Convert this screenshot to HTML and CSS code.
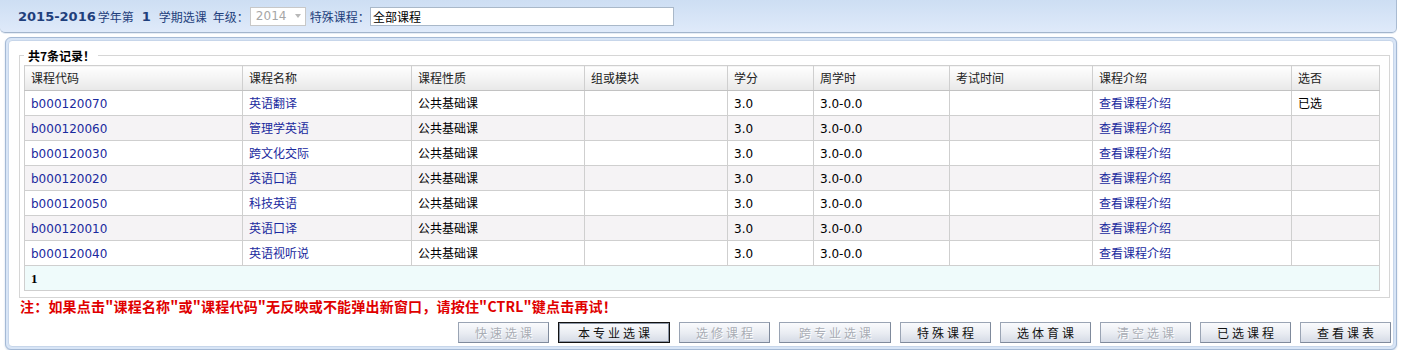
FILE: index.html
```html
<!DOCTYPE html>
<html lang="zh-CN">
<head>
<meta charset="utf-8">
<title>选课</title>
<link rel="stylesheet" href="styles.css">
</head>
<body>
<div class="topbar">
  <b class="yr">2015-2016</b><span class="lbl">学年第</span><b class="term">1</b><span class="lbl">学期选课</span><span class="lbl gap">年级：</span>
  <span class="sel"><span class="sel-val">2014</span><span class="sel-arrow"></span></span>
  <span class="lbl">特殊课程：</span>
  <span class="inp">全部课程</span>
</div>
<div class="panel">
  <div class="panel-inner">
    <fieldset class="box">
      <legend>共7条记录！</legend>
      <table class="grid">
        <colgroup>
          <col style="width:218px"><col style="width:169px"><col style="width:173px"><col style="width:143px"><col style="width:86px"><col style="width:136px"><col style="width:143px"><col style="width:199px"><col style="width:88px">
        </colgroup>
        <thead>
          <tr><th>课程代码</th><th>课程名称</th><th>课程性质</th><th>组或模块</th><th>学分</th><th>周学时</th><th>考试时间</th><th>课程介绍</th><th>选否</th></tr>
        </thead>
        <tbody>
          <tr><td><a>b000120070</a></td><td><a>英语翻译</a></td><td>公共基础课</td><td></td><td>3.0</td><td>3.0-0.0</td><td></td><td><a>查看课程介绍</a></td><td>已选</td></tr>
          <tr class="alt"><td><a>b000120060</a></td><td><a>管理学英语</a></td><td>公共基础课</td><td></td><td>3.0</td><td>3.0-0.0</td><td></td><td><a>查看课程介绍</a></td><td></td></tr>
          <tr><td><a>b000120030</a></td><td><a>跨文化交际</a></td><td>公共基础课</td><td></td><td>3.0</td><td>3.0-0.0</td><td></td><td><a>查看课程介绍</a></td><td></td></tr>
          <tr class="alt"><td><a>b000120020</a></td><td><a>英语口语</a></td><td>公共基础课</td><td></td><td>3.0</td><td>3.0-0.0</td><td></td><td><a>查看课程介绍</a></td><td></td></tr>
          <tr><td><a>b000120050</a></td><td><a>科技英语</a></td><td>公共基础课</td><td></td><td>3.0</td><td>3.0-0.0</td><td></td><td><a>查看课程介绍</a></td><td></td></tr>
          <tr class="alt"><td><a>b000120010</a></td><td><a>英语口译</a></td><td>公共基础课</td><td></td><td>3.0</td><td>3.0-0.0</td><td></td><td><a>查看课程介绍</a></td><td></td></tr>
          <tr><td><a>b000120040</a></td><td><a>英语视听说</a></td><td>公共基础课</td><td></td><td>3.0</td><td>3.0-0.0</td><td></td><td><a>查看课程介绍</a></td><td></td></tr>
          <tr class="pager"><td colspan="9">1</td></tr>
        </tbody>
      </table>
    </fieldset>
    <div class="note">注：如果点击"课程名称"或"课程代码"无反映或不能弹出新窗口，请按住"CTRL"键点击再试！</div>
    <div class="btns">
      <span class="btn w1 dis">快速选课</span>
      <span class="btn w2 act">本专业选课</span>
      <span class="btn w1 dis">选修课程</span>
      <span class="btn w2 dis">跨专业选课</span>
      <span class="btn w1">特殊课程</span>
      <span class="btn w1">选体育课</span>
      <span class="btn w1 dis">清空选课</span>
      <span class="btn w1">已选课程</span>
      <span class="btn w1">查看课表</span>
    </div>
  </div>
</div>
</body>
</html>
```

FILE: styles.css
```css
html, body {
  margin: 0;
  padding: 0;
  background: #ffffff;
}
body {
  font-family: "DejaVu Sans", "Noto Sans CJK SC", sans-serif;
  font-size: 12px;
  color: #000;
}
.topbar {
  width: 1378px;
  height: 32px;
  padding-left: 18px;
  display: flex;
  align-items: center;
  background: linear-gradient(#cddef3, #dfeafa);
  border-right: 1px solid #a9bbd2;
  border-bottom: 1px solid #a3b5cc;
  border-radius: 0 0 5px 5px;
  color: #1f3f7c;
  box-shadow: 0 1px 0 #e6edf6;
}
.yr {
  font-size: 13px;
  font-weight: bold;
  margin-right: 2px;
}
.term {
  font-size: 13px;
  font-weight: bold;
  margin: 0 8px;
}
.lbl {
  font-family: "Noto Sans CJK SC", sans-serif;
  font-size: 12px;
}
.gap { margin-left: 6px; }
.sel {
  display: inline-flex;
  align-items: center;
  justify-content: space-between;
  box-sizing: border-box;
  width: 56px;
  height: 19px;
  margin: 0 4px 0 1px;
  padding: 0 4px 0 5px;
  background: #fff;
  border: 1px solid #c8c8c8;
  color: #a6a6a6;
  font-size: 12px;
}
.sel-arrow {
  width: 0;
  height: 0;
  border-left: 3px solid transparent;
  border-right: 3px solid transparent;
  border-top: 4px solid #b8b8b8;
}
.inp {
  display: inline-flex;
  align-items: center;
  box-sizing: border-box;
  width: 304px;
  height: 19px;
  padding-left: 2px;
  background: #fff;
  border: 1px solid #a9b8c9;
  font-family: "Noto Sans CJK SC", sans-serif;
  font-size: 12px;
  color: #000;
}
.panel {
  margin: 4px 4px 0 5px;
  height: 313px;
  border: 1px solid #a4b9d5;
  border-radius: 6px;
  background: #d8e5f6;
  padding: 2px;
  box-sizing: border-box;
  box-shadow: 0 1px 2px #c9d6e6;
}
.panel-inner {
  height: 100%;
  box-sizing: border-box;
  background: #fff;
  border: 1px solid #c7d6ea;
  border-radius: 4px;
  padding: 7px 2px 0 10px;
}
.box {
  margin: 0;
  padding: 2px 9px 6px 4px;
  border: 1px solid #d6d6d6;
  width: 1370px;
  box-sizing: border-box;
}
.box legend {
  padding: 0 3px 0 4px;
  font-family: "Noto Sans CJK SC", sans-serif;
  font-size: 12px;
  font-weight: bold;
  line-height: 15px;
  color: #000;
}
.grid {
  border-collapse: collapse;
  table-layout: fixed;
  width: 1355px;
  border: 1px solid #c4c4c4;
}
.grid th, .grid td {
  height: 25px;
  box-sizing: border-box;
  padding: 0 0 0 6px;
  border: 1px solid #cfcfcf;
  text-align: left;
  white-space: nowrap;
  font-size: 12px;
  line-height: 14px;
}
.grid th {
  font-weight: normal;
  font-family: "Noto Sans CJK SC", sans-serif;
  color: #222;
  background: linear-gradient(#ffffff, #e8e8e8);
  border-bottom-color: #c2c2c2;
}
.grid td {
  padding-top: 2px;
}
.grid a {
  color: #1a2a9e;
  text-decoration: none;
}
.grid tr.alt td {
  background: #f5f3f5;
}
.grid tr.pager td {
  background: #effbfb;
  font-family: "Liberation Serif", serif;
  font-weight: bold;
  font-size: 13px;
}
.note {
  margin-top: 0;
  padding-left: 1px;
  height: 16px;
  line-height: 16px;
  color: #e00000;
  font-family: "Noto Sans CJK SC", sans-serif;
  font-weight: bold;
  font-size: 14px;
  letter-spacing: 0.2px;
}
.btns {
  display: flex;
  justify-content: flex-end;
  gap: 9px;
  margin-top: 8px;
}
.btn {
  display: inline-flex;
  align-items: center;
  justify-content: center;
  box-sizing: border-box;
  height: 21px;
  border: 1px solid #9aa4b4;
  border-right-color: #7f8a9c;
  border-bottom-color: #7f8a9c;
  background: linear-gradient(#fafbfd, #e9ecf2 55%, #d5dbe6);
  font-family: "Noto Sans CJK SC", sans-serif;
  font-size: 12px;
  letter-spacing: 3px;
  padding-left: 3px;
  color: #111;
}
.w1 { width: 91px; }
.w2 { width: 112px; }
.btn.dis {
  color: #a9adb5;
  text-shadow: 1px 1px 0 #ffffff;
}
.btn.act {
  border: 1px solid #111;
  box-shadow: inset 0 0 0 1px #8c96a6;
}
```
